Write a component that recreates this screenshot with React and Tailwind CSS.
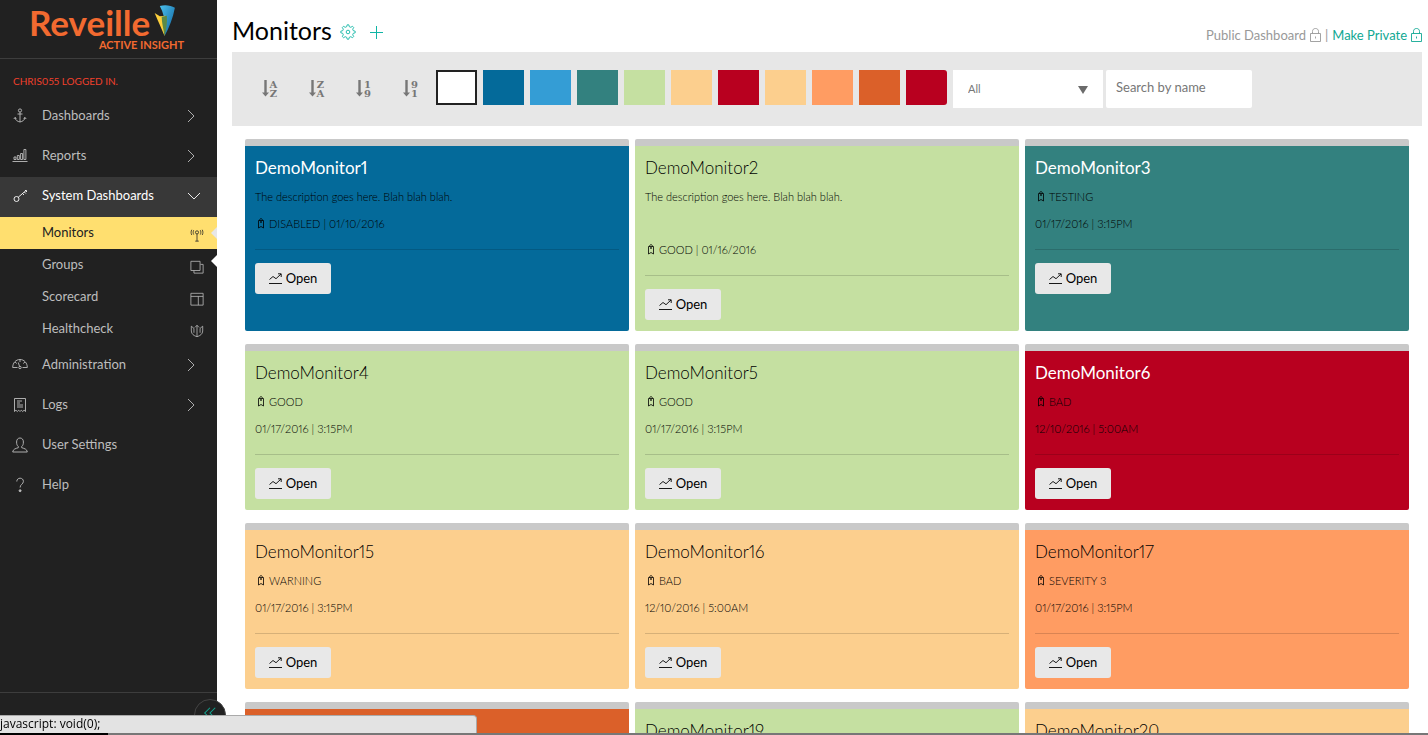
import { useState } from "react";

const SWATCHES = [
  { name: "All colors", className: "bg-white border-2 border-[#222]" },
  { name: "Blue", className: "bg-[#046a9a]" },
  { name: "Light blue", className: "bg-[#349dd5]" },
  { name: "Teal", className: "bg-[#33817f]" },
  { name: "Green", className: "bg-[#c5e0a1]" },
  { name: "Peach", className: "bg-[#fccf8e]" },
  { name: "Red", className: "bg-[#b8001f]" },
  { name: "Sand", className: "bg-[#fccf8e]" },
  { name: "Orange", className: "bg-[#ff9c62]" },
  { name: "Rust", className: "bg-[#db6029]" },
  { name: "Crimson", className: "bg-[#b8001f] rounded-r-[3px]" },
];

const TONES = {
  blue: "bg-[#046a9a]",
  teal: "bg-[#33817f]",
  green: "bg-[#c5e0a1]",
  peach: "bg-[#fccf8e]",
  red: "bg-[#b8001f]",
  orange: "bg-[#ff9c62]",
  rust: "bg-[#db6029]",
};

const LIGHT_TITLE = ["blue", "teal", "red", "rust"];

const MONITORS = [
  { name: "DemoMonitor1", tone: "blue", description: "The description goes here. Blah blah blah.", status: "DISABLED | 01/10/2016" },
  { name: "DemoMonitor2", tone: "green", description: "The description goes here. Blah blah blah.", spacer: true, status: "GOOD | 01/16/2016" },
  { name: "DemoMonitor3", tone: "teal", status: "TESTING", date: "01/17/2016 | 3:15PM" },
  { name: "DemoMonitor4", tone: "green", status: "GOOD", date: "01/17/2016 | 3:15PM" },
  { name: "DemoMonitor5", tone: "green", status: "GOOD", date: "01/17/2016 | 3:15PM" },
  { name: "DemoMonitor6", tone: "red", status: "BAD", date: "12/10/2016 | 5:00AM" },
  { name: "DemoMonitor15", tone: "peach", status: "WARNING", date: "01/17/2016 | 3:15PM" },
  { name: "DemoMonitor16", tone: "peach", status: "BAD", date: "12/10/2016 | 5:00AM" },
  { name: "DemoMonitor17", tone: "orange", status: "SEVERITY 3", date: "01/17/2016 | 3:15PM" },
  { name: "DemoMonitor18", tone: "rust", status: "SEVERITY 4", date: "01/17/2016 | 3:15PM" },
  { name: "DemoMonitor19", tone: "green", status: "GOOD", date: "01/17/2016 | 3:15PM" },
  { name: "DemoMonitor20", tone: "peach", status: "WARNING", date: "01/17/2016 | 3:15PM" },
];

const Icon = ({ size = 16, children, className = "" }) => (
  <svg
    width={size}
    height={size}
    viewBox="0 0 16 16"
    fill="none"
    stroke="currentColor"
    strokeWidth="0.9"
    className={`shrink-0 ${className}`}
    aria-hidden="true"
  >
    {children}
  </svg>
);

const AnchorIcon = () => (
  <Icon>
    <circle cx="8" cy="2.5" r="1.6" />
    <path d="M8 4.1V14M5.5 6h5M3 9.500c.3 2.700 2.500 4 5 4.500 2.500-.5 4.700-1.800 5-4.500M1.800 11l1.200-1.500 1.500 1.200M14.200 11L13 9.500l-1.500 1.200" />
  </Icon>
);

const BarsIcon = () => (
  <Icon>
    <path d="M.5 13.500h15M2 11.500V9h2v2.500zM5.300 11.500v-4h2v4zM8.600 11.500v-6h2v6zM11.900 11.500v-10h2v10z" />
  </Icon>
);

const KeyIcon = () => (
  <Icon>
    <circle cx="4.500" cy="11" r="2.500" />
    <path d="M6.300 9.200L14 2.500M10.500 5.500l1.500 1.500M12.300 4l1.500 1.500M13 2.500h1.500V4" />
  </Icon>
);

const GaugeIcon = () => (
  <Icon>
    <path d="M5.500 10.500H.7C.7 6 3.800 2.500 8 2.500s7.300 3.500 7.300 8h-4.800M8 2.500V5M3 5l1.800 1.500M13 5l-1.800 1.500M6.300 5.500l1.200 3.800" />
    <circle cx="8" cy="10.500" r="1.200" />
  </Icon>
);

const ReceiptIcon = () => (
  <Icon>
    <path d="M2.500 14.500V1.500h11v13l-1.400-1.300-1.400 1.300-1.400-1.300L8 14.500l-1.300-1.300-1.400 1.300-1.400-1.300zM5 4h5M5 6h3M5 8h6M5 10h6" />
  </Icon>
);

const UserIcon = () => (
  <Icon>
    <path d="M6.300 9.500C5 8.500 4.600 7 4.600 5 4.600 2.500 6 1 8 1s3.400 1.500 3.400 4c0 2-.4 3.500-1.700 4.500v1.200c2.500.8 5.300 1.300 5.600 4.300H.7c.3-3 3.100-3.500 5.600-4.300z" />
  </Icon>
);

const HelpIcon = () => (
  <Icon>
    <path d="M4.800 4.500C4.800 2.500 6.200 1.200 8.100 1.200s3.300 1.200 3.300 3.200c0 2.800-3.300 2.900-3.300 6.100" />
    <circle cx="8.100" cy="13.700" r="1" fill="currentColor" />
  </Icon>
);

const AntennaIcon = () => (
  <Icon size={14}>
    <circle cx="8" cy="5" r="1.800" />
    <path d="M8 6.800V15M6 15h4M4.200 2.500c-.8 1.500-.8 3.500 0 5M11.800 2.500c.8 1.500.8 3.500 0 5M2 2c-1 2-1 4 0 6M14 2c1 2 1 4 0 6" />
  </Icon>
);

const StackIcon = () => (
  <Icon size={14}>
    <path d="M1 1.500h10.500V12H1zM12 5h3v10H4.500v-3" />
  </Icon>
);

const LayoutIcon = () => (
  <Icon size={14}>
    <path d="M1 1.500h14V15H1zM1 5h14M9.500 5v10" />
  </Icon>
);

const ShieldIcon = () => (
  <Icon size={14}>
    <path d="M1.500 2.500V8c0 3.500 3 5.500 6.500 6.500 3.500-1 6.500-3 6.500-6.500V2.500l-3 2.500M1.500 2.500l3 2.500M8 1.500v13M5.500 4L8 1.500 10.500 4M4.500 5v5M11.500 5v5" />
  </Icon>
);

const ChevronRight = () => (
  <Icon className="mr-[18px]">
    <path d="M5 2l6 6-6 6" />
  </Icon>
);

const ChevronDown = () => (
  <Icon className="mr-[15px]">
    <path d="M2 5l6 6 6-6" />
  </Icon>
);

const GearIcon = () => (
  <Icon>
    <path d="M6.700 2.700L7.200.8h1.600l.5 1.900 1.500.6 1.700-1 1.200 1.200-1 1.700.6 1.500 1.900.5v1.600l-1.900.5-.6 1.500 1 1.700-1.200 1.200-1.700-1-1.500.6-.5 1.900H7.200l-.5-1.900-1.500-.6-1.700 1-1.200-1.200 1-1.700-.6-1.500L.8 8.800V7.200l1.900-.5.6-1.500-1-1.700 1.200-1.200 1.700 1z" />
    <circle cx="8" cy="8" r="1.800" />
  </Icon>
);

const PlusIcon = () => (
  <Icon>
    <path d="M8.500 2v13M2 8.500h13" strokeWidth="1" />
  </Icon>
);

const LockIcon = () => (
  <svg width="11" height="14" viewBox="0 0 11 14" fill="none" stroke="currentColor" strokeWidth="0.900" aria-hidden="true">
    <path d="M.5 5.500h10v8H.5zM2.500 5.500v-2c0-2 1.200-3 3-3s3 1 3 3v2M5.500 8.500v2" />
  </svg>
);

const TagIcon = () => (
  <svg width="8" height="11" viewBox="0 0 8 11" fill="none" stroke="currentColor" strokeWidth="0.800" aria-hidden="true">
    <path d="M1.500 10V2.500h5V10L4 8.500zM2.500 2.500C2.500 1.500 3 .7 4 .7s1.500.8 1.500 1.800" />
    <circle cx="4" cy="4" r=".6" />
  </svg>
);

const TrendIcon = () => (
  <svg width="13" height="11" viewBox="0 0 13 11" fill="none" stroke="currentColor" strokeWidth="0.900" aria-hidden="true">
    <path d="M0 10.500h13M.5 6.500L4 3.500l3 2.200L12 1M9 .8h3.200V4" />
  </svg>
);

const Logo = () => (
  <div className="h-[58px] pt-[5px] pl-[29px] flex flex-col items-start text-[#f26a30] font-bold">
    <div className="flex flex-col items-end">
      <div className="flex items-start gap-1">
        <span className="text-[35px] leading-[35px]">Reveille</span>
        <svg width="22" height="32" viewBox="0 0 23 34" aria-hidden="true">
          <defs>
            <linearGradient id="wing" x1="0" y1="0" x2="1" y2="1">
              <stop offset="0" stopColor="#4cc0ec" />
              <stop offset="1" stopColor="#0c5f9c" />
            </linearGradient>
          </defs>
          <path d="M6 1C12-.5 18 .5 22 3 20 14 16 24 11 33 13 22 11 10 6 1z" fill="url(#wing)" />
          <path d="M.5 8.500L6 12l6-.5-1 21.500C8 25 4 17 .5 8.500z" fill="#fdcf3c" />
          <path d="M8 12.500l5.500-1c.5 7-.5 14-2.500 21.500-1-7-3-14-3-20.500z" fill="#5c8a45" />
        </svg>
      </div>
      <span className="mr-[-8px] text-[11px] leading-[10px]">ACTIVE INSIGHT</span>
    </div>
  </div>
);

const NavItem = ({ icon, label, trailing, active }) => (
  <a
    href="#"
    className={`flex items-center h-10 pl-3 pb-0.5 ${active ? "bg-[#383838] text-white" : "text-[#bdbdbd]"}`}
  >
    {icon}
    <span className="ml-3.5 flex-1">{label}</span>
    {trailing}
  </a>
);

const SubItem = ({ icon, label, active }) => (
  <a
    href="#"
    className={`relative flex items-center justify-between h-8 pl-[42px] pr-[13px] ${
      active ? "bg-[#ffdf6f] text-[#222]" : "text-[#bdbdbd]"
    }`}
  >
    <span>{label}</span>
    <span className="pt-1">{icon}</span>
    {active && (
      <span className="absolute right-0 top-2.5 border-y-[6px] border-y-transparent border-r-[6px] border-r-[#e7e7e7]" />
    )}
  </a>
);

const Sidebar = () => (
  <aside className="relative z-10 w-[217px] shrink-0 bg-[#212121] flex flex-col text-[13px]">
    <Logo />
    <div className="border-t border-[#3d3d3d] h-[39px] pt-3.5 pl-[13px] text-[10px] leading-4 text-[#f0402c]">
      CHRIS055 LOGGED IN.
    </div>
    <nav>
      <NavItem icon={<AnchorIcon />} label="Dashboards" trailing={<ChevronRight />} />
      <NavItem icon={<BarsIcon />} label="Reports" trailing={<ChevronRight />} />
      <NavItem icon={<KeyIcon />} label="System Dashboards" trailing={<ChevronDown />} active />
      <SubItem icon={<AntennaIcon />} label="Monitors" active />
      <div className="relative">
        <SubItem icon={<StackIcon />} label="Groups" />
        <span className="absolute right-0 top-1.5 border-y-[6px] border-y-transparent border-r-[6px] border-r-white" />
      </div>
      <SubItem icon={<LayoutIcon />} label="Scorecard" />
      <SubItem icon={<ShieldIcon />} label="Healthcheck" />
      <div className="pt-px">
        <NavItem icon={<GaugeIcon />} label="Administration" trailing={<ChevronRight />} />
        <NavItem icon={<ReceiptIcon />} label="Logs" trailing={<ChevronRight />} />
        <NavItem icon={<UserIcon />} label="User Settings" />
        <NavItem icon={<HelpIcon />} label="Help" />
      </div>
    </nav>
    <div className="mt-auto h-[43px] border-t border-[#3d3d3d]">
      <button
        aria-label="Collapse menu"
        className="absolute right-[-9px] bottom-1 w-8 h-8 rounded-full bg-[#212121] border border-[#444] flex items-start justify-center pt-1.5 text-[#10a893]"
      >
        <Icon size={14}>
          <path d="M8 2L2 8l6 6M14 2L8 8l6 6" strokeWidth="1.200" />
        </Icon>
      </button>
    </div>
  </aside>
);

const SortButton = ({ top, bottom }) => (
  <button
    aria-label={`Sort ${top} to ${bottom}`}
    className="w-[41px] h-[37px] pl-0.5 flex items-center justify-center gap-px text-[#777]"
  >
    <svg width="7" height="17" viewBox="0 0 7 17" fill="currentColor" aria-hidden="true">
      <path d="M2.300 0h2.400v12.500H7L3.500 16.500 0 12.500h2.300z" />
    </svg>
    <span className="flex flex-col font-['DejaVu_Serif',serif] font-bold text-[10px] leading-[9px]">
      <span>{top}</span>
      <span>{bottom}</span>
    </span>
  </button>
);

const Toolbar = ({ query, setQuery }) => (
  <div className="bg-[#e7e7e7] h-[74px] pt-[18px] pl-4 flex items-start gap-1.5">
    <SortButton top="A" bottom="Z" />
    <SortButton top="Z" bottom="A" />
    <SortButton top="1" bottom="9" />
    <SortButton top="9" bottom="1" />
    {SWATCHES.map((swatch) => (
      <button key={swatch.name} aria-label={swatch.name} className={`w-[41px] h-[35px] ${swatch.className}`} />
    ))}
    <div className="flex gap-[3px]">
      <div className="relative">
        <select
          aria-label="Filter"
          className="appearance-none w-[150px] h-[38px] pl-[15px] bg-white text-[11px] text-[#777] outline-none"
        >
          <option>All</option>
        </select>
        <svg
          width="10"
          height="8"
          viewBox="0 0 10 8"
          className="absolute right-[15px] top-4 pointer-events-none fill-[#6b6b6b]"
          aria-hidden="true"
        >
          <path d="M0 0h10L5 8z" />
        </svg>
      </div>
      <input
        type="text"
        aria-label="Search by name"
        placeholder="Search by name"
        value={query}
        onChange={(e) => setQuery(e.target.value)}
        className="w-[146px] h-[38px] px-2.5 pb-1 rounded-xs bg-white text-[13px] placeholder:text-[#777] outline-none"
      />
    </div>
  </div>
);

const MonitorCard = ({ monitor }) => (
  <article
    className={`rounded-xs border-t-[7px] border-[#c9c9c9] px-2.5 pb-[11px] text-[11px] leading-[27px] text-black ${TONES[monitor.tone]}`}
  >
    <h2
      className={`h-[37px] pt-2 text-[17px] leading-[28px] ${
        LIGHT_TITLE.includes(monitor.tone) ? "text-white" : "font-light text-black"
      }`}
    >
      {monitor.name}
    </h2>
    {monitor.description && <p className="font-light">{monitor.description}</p>}
    {monitor.spacer && <div className="h-[26px]" />}
    <p className="flex items-center gap-1 pl-0.5 font-light">
      <TagIcon />
      {monitor.status}
    </p>
    {monitor.date && <p className="font-light">{monitor.date}</p>}
    <hr className="mt-3 mb-[13px] border-black/15" />
    <button className="h-[31px] w-[76px] rounded-[3px] bg-[#e8e8e8] flex items-center justify-center gap-1 text-[13px]">
      <TrendIcon />
      Open
    </button>
  </article>
);

const App = () => {
  const [query, setQuery] = useState("");
  const monitors = MONITORS.filter((m) => m.name.toLowerCase().includes(query.toLowerCase()));

  return (
    <div className="h-screen overflow-hidden flex bg-white font-['Lato',sans-serif] proportional-nums">
      <Sidebar />
      <main className="flex-1 min-w-0 pl-[15px] pr-1.5">
        <header className="h-[52px] flex items-center justify-between pt-3">
          <div className="flex items-center text-[#10b5a5]">
            <h1 className="text-[25px] leading-8 text-black pb-1">Monitors</h1>
            <button aria-label="Settings" className="ml-2">
              <GearIcon />
            </button>
            <button aria-label="Add monitor" className="ml-3">
              <PlusIcon />
            </button>
          </div>
          <div className="flex items-center gap-1 pt-1.5 text-[13px] leading-4 text-[#999]">
            <span>Public Dashboard</span>
            <LockIcon />
            <span>|</span>
            <a href="#" className="flex items-center gap-1 text-[#10a893]">
              Make Private
              <LockIcon />
            </a>
          </div>
        </header>
        <Toolbar query={query} setQuery={setQuery} />
        <section className="grid grid-cols-3 gap-x-1.5 gap-y-[13px] px-[13px] pt-[13px]">
          {monitors.map((monitor) => (
            <MonitorCard key={monitor.name} monitor={monitor} />
          ))}
        </section>
      </main>

      <div className="fixed bottom-0 inset-x-0 z-20">
        <div className="w-[477px] h-[18px] bg-[#e3e3e3] border-t border-r border-[#aaa] rounded-tr text-[12px] leading-4 text-black font-['Open_Sans',sans-serif]">
          javascript: void(0);
        </div>
        <div className="h-0.5 bg-[#777]">
          <div className="h-0.5 w-[108px] bg-black" />
        </div>
      </div>
    </div>
  );
};

export default App;
